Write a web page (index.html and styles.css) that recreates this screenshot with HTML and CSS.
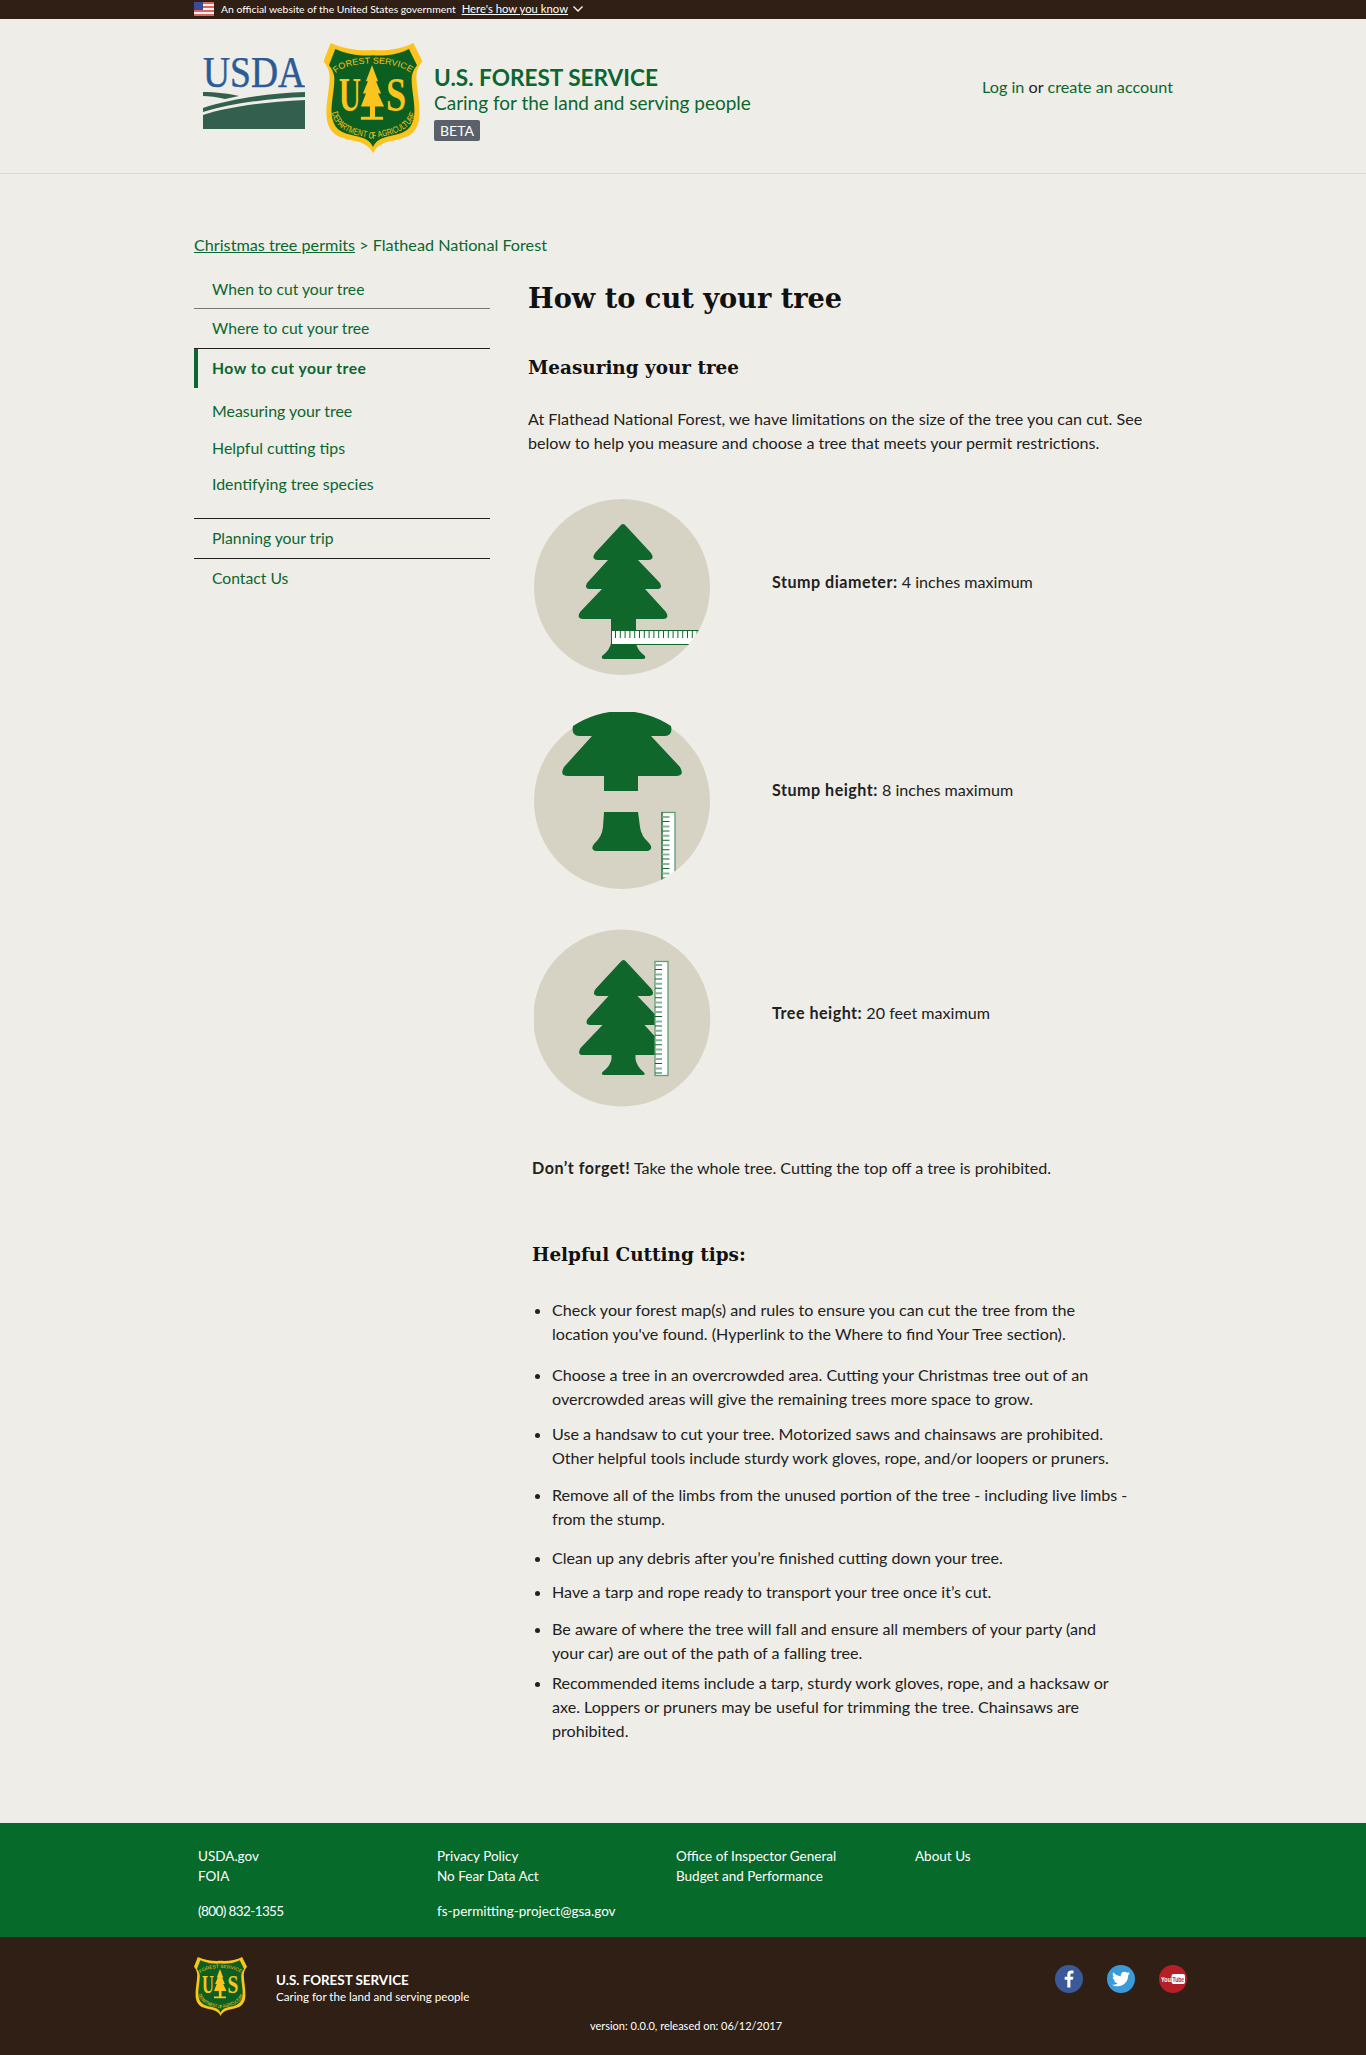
FILE: index.html
```html
<!DOCTYPE html>
<html lang="en">
<head>
    <meta charset="UTF-8">
    <meta name="viewport" content="width=device-width, initial-scale=1.0">
    <title>How to cut your tree</title>
    <link rel="stylesheet" href="styles.css">
</head>
<body>
    <div class="gov-banner">
        <div class="wrap gov-banner-inner">
            <svg class="flag" viewBox="0 0 20 14" width="20" height="14">
                <rect width="20" height="14" fill="#f4efe9"/>
                <path d="M0 1h20M0 5h20M0 9h20M0 13h20" stroke="#d9655c" stroke-width="2"/>
                <rect width="9" height="8" fill="#3c4a9c"/>
            </svg>
            <span>An official website of the United States government</span>
            <a href="#" class="gov-link">Here's how you know</a>
            <svg class="chevron" viewBox="0 0 10 6" width="10" height="6">
                <path d="M.5.5L5 5 9.5.5" fill="none" stroke="#fff" stroke-width="1.300"/>
            </svg>
        </div>
    </div>

    <header class="site-header">
        <div class="wrap site-header-inner">
            <svg class="usda-logo" viewBox="0 0 102 71" width="102" height="71">
                <text class="usda-word" x="0" y="29" font-size="44" textLength="102" lengthAdjust="spacingAndGlyphs" fill="#2b5b97" stroke="#2b5b97" stroke-width=".5">USDA</text>
                <path d="M0 34C12 34 28 36 36 38L22 41C14 39 6 38 0 38Z" fill="#335f4e"/>
                <path d="M102 34V39C70 40 30 45 0 54V50C30 40 70 35 102 34Z" fill="#335f4e"/>
                <path d="M0 57C25 49 60 44 102 42V71H0Z" fill="#335f4e"/>
            </svg>
            <svg class="shield-logo" viewBox="0 0 98 109" width="100" height="110">
                <g id="shield-art">
                    <path d="M7 0C20 6 36 8 49 7C62 8 78 6 89 0L98 18C94 23 92 28 92 33C92 46 96 60 95 73C94 84 89 90 82 93C72 97 64 97 58 100C54 102 51 105 49 109C47 105 44 102 40 100C34 97 26 97 16 93C9 90 4 84 3 73C2 60 6 46 6 33C6 28 4 23 0 18Z" fill="#fcc41e"/>
                    <path d="M7 0C20 6 36 8 49 7C62 8 78 6 89 0L98 18C94 23 92 28 92 33C92 46 96 60 95 73C94 84 89 90 82 93C72 97 64 97 58 100C54 102 51 105 49 109C47 105 44 102 40 100C34 97 26 97 16 93C9 90 4 84 3 73C2 60 6 46 6 33C6 28 4 23 0 18Z" transform="translate(49 54) scale(.89) translate(-49 -54)" fill="#0b5f20"/>
                    <path id="shield-top" d="M12 30C24 17 72 17 87 30" fill="none"/>
                    <path id="shield-bottom" d="M8 69C13 90 34 91 49 95C64 91 85 90 92 69" fill="none"/>
                    <text class="shield-curve" fill="#fcc41e" font-size="8.500"><textPath href="#shield-top" textLength="78" lengthAdjust="spacingAndGlyphs">FOREST SERVICE</textPath></text>
                    <text class="shield-curve" fill="#fcc41e" font-size="9"><textPath href="#shield-bottom" textLength="104" lengthAdjust="spacingAndGlyphs">DEPARTMENT OF AGRICULTURE</textPath></text>
                    <text class="shield-letter" x="15" y="67" fill="#fcc41e" font-size="48" textLength="22" lengthAdjust="spacingAndGlyphs">U</text>
                    <text class="shield-letter" x="62" y="67" fill="#fcc41e" font-size="48" textLength="20" lengthAdjust="spacingAndGlyphs">S</text>
                    <path d="M48 22L54 38H52L57 50H54L60 63H51V73H59V76H37V73H46V63H37L42 50H39L44 38H42Z" fill="#fcc41e"/>
                </g>
            </svg>
            <div class="site-title">
                <div class="site-name">U.S. FOREST SERVICE</div>
                <div class="site-tagline">Caring for the land and serving people</div>
                <span class="beta">BETA</span>
            </div>
            <div class="site-login"><a href="#">Log in</a> or <a href="#">create an account</a></div>
        </div>
    </header>

    <div class="wrap page">
        <div class="breadcrumb"><a href="#">Christmas tree permits</a> &gt; Flathead National Forest</div>
        <div class="columns">
            <nav class="side-nav">
                <a href="#" class="nav-item nav-first">When to cut your tree</a>
                <a href="#" class="nav-item">Where to cut your tree</a>
                <a href="#" class="nav-item nav-current">How to cut your tree</a>
                <div class="nav-sub">
                    <a href="#">Measuring your tree</a>
                    <a href="#">Helpful cutting tips</a>
                    <a href="#">Identifying tree species</a>
                </div>
                <a href="#" class="nav-item">Planning your trip</a>
                <a href="#" class="nav-item nav-last">Contact Us</a>
            </nav>
            <main class="content">
                <h1>How to cut your tree</h1>
                <h2>Measuring your tree</h2>
                <p class="intro">At Flathead National Forest, we have limitations on the size of the tree you can cut. See below to help you measure and choose a tree that meets your permit restrictions.</p>

                <div class="measure-row">
                    <svg class="measure-icon" viewBox="15 18 178 178" width="178" height="178">
                        <defs><clipPath id="clip-one"><circle cx="103" cy="107" r="88"/></clipPath></defs>
                        <circle cx="103" cy="107" r="88" fill="#d6d3c4"/>
                        <path d="M101 46Q104 42 107 46L132 73Q136 79 130 80H119L141 103Q144 109 138 109H126L147 132Q151 139 144 139H117V163Q118 170 126 176Q127 179 124 179H85Q82 179 83 176Q91 170 92 163V139H64Q57 139 61 132L83 109H71Q65 109 68 103L89 80H78Q72 79 76 73Z" fill="#10672b"/>
                        <g clip-path="url(#clip-one)">
                            <rect x="92.500" y="150.500" width="110" height="14" fill="#fff" stroke="#10672b"/>
                            <line x1="96" y1="154.500" x2="202" y2="154.500" stroke="#10672b" stroke-width="7" stroke-dasharray="1 3.800"/>
                        </g>
                    </svg>
                    <p class="measure-text"><strong>Stump diameter:</strong> 4 inches maximum</p>
                </div>

                <div class="measure-row measure-row-stump">
                    <svg class="measure-icon" viewBox="15 17 178 178" width="178" height="178">
                        <defs><clipPath id="clip-two"><circle cx="103" cy="106" r="88"/></clipPath></defs>
                        <circle cx="103" cy="106" r="88" fill="#d6d3c4"/>
                        <path d="M54 31A88 88 0 0 1 152 31Q154 41 146 41H132L161 72Q166 81 157 81H119V96H85V81H49Q40 81 45 72L73 41H60Q52 41 54 31Z" fill="#10672b"/>
                        <path d="M85 117H119L121 132Q122 141 130 148Q135 154 129 156H76Q71 154 75 149Q83 142 84 132Z" fill="#10672b"/>
                        <g clip-path="url(#clip-two)">
                            <rect x="143" y="117.500" width="13" height="90" fill="#fff" stroke="#5f9c74" stroke-width="1.300"/>
                            <line x1="143" y1="117" x2="143" y2="200" stroke="#10672b"/>
                            <line x1="147" y1="121" x2="147" y2="200" stroke="#8ab59a" stroke-width="7" stroke-dasharray="2 7.400"/>
                            <line x1="147" y1="126" x2="147" y2="200" stroke="#10672b" stroke-width="7" stroke-dasharray="1 8.400"/>
                        </g>
                    </svg>
                    <p class="measure-text"><strong>Stump height:</strong> 8 inches maximum</p>
                </div>

                <div class="measure-row">
                    <svg class="measure-icon" viewBox="14.500 13 178 178" width="178" height="178">
                        <circle cx="102.300" cy="102" r="88.500" fill="#d6d3c4"/>
                        <path d="M101 46Q104 42 107 46L132 73Q136 79 130 80H118L140 103Q143 109 137 109H125L146 132Q150 139 143 139H116V143Q117 150 124 156Q127 159 123 159H85Q81 159 83 156Q91 150 92 143V139H64Q57 139 61 132L83 109H71Q65 109 68 103L89 80H78Q72 79 76 73Z" fill="#10672b"/>
                        <rect x="135.500" y="45.500" width="13" height="114" fill="#fff" stroke="#5f9c74" stroke-width="1.300"/>
                        <line x1="139" y1="48" x2="139" y2="158" stroke="#8ab59a" stroke-width="7" stroke-dasharray="2 7.400"/>
                        <line x1="139" y1="53" x2="139" y2="158" stroke="#10672b" stroke-width="7" stroke-dasharray="1 8.400"/>
                    </svg>
                    <p class="measure-text"><strong>Tree height:</strong> 20 feet maximum</p>
                </div>

                <div class="inset">
                    <p class="reminder"><strong>Don’t forget!</strong> Take the whole tree. Cutting the top off a tree is prohibited.</p>
                    <h2 class="tips-title">Helpful Cutting tips:</h2>
                    <ul class="tips">
                        <li>Check your forest map(s) and rules to ensure you can cut the tree from the location you've found. (Hyperlink to the Where to find Your Tree section).</li>
                        <li>Choose a tree in an overcrowded area. Cutting your Christmas tree out of an overcrowded areas will give the remaining trees more space to grow.</li>
                        <li>Use a handsaw to cut your tree. Motorized saws and chainsaws are prohibited. Other helpful tools include sturdy work gloves, rope, and/or loopers or pruners.</li>
                        <li>Remove all of the limbs from the unused portion of the tree - including live limbs - from the stump.</li>
                        <li>Clean up any debris after you’re finished cutting down your tree.</li>
                        <li>Have a tarp and rope ready to transport your tree once it’s cut.</li>
                        <li>Be aware of where the tree will fall and ensure all members of your party (and your car) are out of the path of a falling tree.</li>
                        <li>Recommended items include a tarp, sturdy work gloves, rope, and a hacksaw or axe. Loppers or pruners may be useful for trimming the tree. Chainsaws are prohibited.</li>
                    </ul>
                </div>
            </main>
        </div>
    </div>

    <footer>
        <div class="footer-links">
            <div class="wrap footer-grid">
                <div>
                    <a href="#">USDA.gov</a>
                    <a href="#">FOIA</a>
                    <a href="#" class="footer-contact footer-phone">(800) 832-1355</a>
                </div>
                <div>
                    <a href="#">Privacy Policy</a>
                    <a href="#">No Fear Data Act</a>
                    <a href="#" class="footer-contact">fs-permitting-project@gsa.gov</a>
                </div>
                <div>
                    <a href="#">Office of Inspector General</a>
                    <a href="#">Budget and Performance</a>
                </div>
                <div>
                    <a href="#">About Us</a>
                </div>
            </div>
        </div>
        <div class="footer-brand">
            <div class="wrap footer-brand-inner">
                <svg class="footer-shield" viewBox="0 0 98 109" width="53" height="59"><use href="#shield-art"/></svg>
                <div class="footer-title">
                    <div class="footer-name">U.S. FOREST SERVICE</div>
                    <div class="footer-tagline">Caring for the land and serving people</div>
                </div>
                <div class="social">
                    <svg viewBox="0 0 28 28" width="28" height="28">
                        <circle cx="14" cy="14" r="14" fill="#3b5998"/>
                        <path d="M15.400 22.500V14.800H18L18.400 11.800H15.400V9.900C15.400 9 15.700 8.400 16.900 8.400H18.500V5.700C18.200 5.700 17.300 5.600 16.200 5.600C13.900 5.600 12.300 7 12.300 9.600V11.800H9.700V14.800H12.300V22.500Z" fill="#fff"/>
                    </svg>
                    <svg viewBox="0 0 28 28" width="28" height="28">
                        <circle cx="14" cy="14" r="14" fill="#3b9ad8"/>
                        <g transform="translate(5 5) scale(.75)">
                            <path d="M23.954 4.569c-.885.389-1.83.654-2.825.775 1.014-.611 1.794-1.574 2.163-2.723-.951.555-2.005.959-3.127 1.184-.896-.959-2.173-1.559-3.591-1.559-2.717 0-4.92 2.203-4.92 4.917 0 .39.045.765.127 1.124C7.691 8.094 4.066 6.13 1.64 3.161c-.427.722-.666 1.561-.666 2.475 0 1.71.87 3.213 2.188 4.096-.807-.026-1.566-.248-2.228-.616v.061c0 2.385 1.693 4.374 3.946 4.827-.413.111-.849.171-1.296.171-.314 0-.615-.03-.916-.086.631 1.953 2.445 3.377 4.604 3.417-1.68 1.319-3.809 2.105-6.102 2.105-.39 0-.779-.023-1.17-.067 2.189 1.394 4.768 2.209 7.557 2.209 9.054 0 13.999-7.496 13.999-13.986 0-.209 0-.42-.015-.63.961-.689 1.8-1.56 2.46-2.548l-.047-.02z" fill="#fff"/>
                        </g>
                    </svg>
                    <svg viewBox="0 0 28 28" width="28" height="28">
                        <circle cx="14" cy="14" r="14" fill="#b71f27"/>
                        <text class="yt-word" x="2" y="17" font-size="7.500" fill="#fff" textLength="10" lengthAdjust="spacingAndGlyphs">You</text>
                        <rect x="12.500" y="9" width="13.500" height="10" rx="2" fill="#fff"/>
                        <text class="yt-word" x="13.500" y="17" font-size="7.500" fill="#b71f27" textLength="11.500" lengthAdjust="spacingAndGlyphs">Tube</text>
                    </svg>
                </div>
            </div>
            <div class="version">version: 0.0.0, released on: 06/12/2017</div>
        </div>
    </footer>
</body>
</html>
```

FILE: styles.css
```css
body {
    margin: 0;
    padding: 0;
    background-color: #efede7;
    color: #212121;
    font-family: Lato, "Open Sans", sans-serif;
    font-size: 16px;
}
a {
    color: #0b6630;
    text-decoration: none;
}
strong {
    font-weight: bold;
    letter-spacing: .5px;
}
.wrap {
    width: 978px;
    margin: 0 auto;
}

/* top banner */
.gov-banner {
    height: 19px;
    background-color: #2f1f14;
    color: #fff;
    font-size: 10.400px;
    line-height: 18px;
}
.gov-banner-inner {
    display: flex;
    align-items: center;
    height: 18px;
}
.flag {
    margin-right: 7px;
}
.gov-link {
    margin-left: 6px;
    color: #fff;
    font-size: 11.300px;
    text-decoration: underline;
}
.chevron {
    margin-left: 5px;
}

/* header */
.site-header {
    height: 154px;
    border-bottom: 1px solid #d8d8d4;
}
.site-header-inner {
    display: flex;
    align-items: flex-start;
}
.usda-logo {
    margin: 39px 0 0 9px;
}
.usda-word, .shield-letter {
    font-family: "Liberation Serif", serif;
}
.shield-letter {
    font-weight: bold;
}
.shield-curve {
    font-family: "Liberation Sans", sans-serif;
}
.shield-logo {
    margin: 24px 0 0 18px;
}
.site-title {
    margin: 46px 0 0 11px;
    color: #0b6630;
}
.site-name {
    font-size: 22.600px;
    font-weight: bold;
    line-height: 26px;
}
.site-tagline {
    font-size: 19px;
    line-height: 23px;
}
.beta {
    display: inline-block;
    margin-top: 6px;
    padding: 0 6px;
    border-radius: 2px;
    background-color: #5b616b;
    color: #fff;
    font-size: 14px;
    line-height: 21px;
}
.site-login {
    margin: 54px -1px 0 auto;
    font-size: 16.200px;
    line-height: 28px;
}

/* sidebar */
.breadcrumb {
    padding-top: 60px;
    color: #0b6630;
    font-size: 16.200px;
    line-height: 22px;
}
.breadcrumb a {
    text-decoration: underline;
}
.columns {
    display: flex;
    margin-top: 14px;
}
.side-nav {
    flex: 0 0 296px;
    font-size: 15.700px;
}
.nav-item {
    display: block;
    padding: 0 18px;
    border-bottom: 1px solid #212121;
    line-height: 39px;
}
.nav-first {
    border-bottom-color: #777;
    line-height: 38px;
}
.nav-current {
    border-left: 4px solid #0b6630;
    border-bottom: none;
    padding-left: 14px;
    font-weight: bold;
    letter-spacing: .5px;
}
.nav-last {
    border-bottom: none;
}
.nav-sub {
    display: flex;
    flex-direction: column;
    padding: 5px 18px 15px;
    border-bottom: 1px solid #212121;
    font-size: 15.900px;
}
.nav-sub a {
    line-height: 36.500px;
}

/* main column */
.content {
    margin-left: 38px;
    width: 644px;
    font-size: 16.100px;
}
h1 {
    margin: 8px 0 0;
    color: #111;
    font-family: "DejaVu Serif", serif;
    font-size: 27.200px;
    line-height: 40px;
}
h2 {
    margin: 35px 0 0;
    color: #111;
    font-family: "DejaVu Serif", serif;
    font-size: 18.400px;
    line-height: 30px;
}
.intro {
    margin: 24px 0 0;
    line-height: 24px;
}
.measure-row {
    display: flex;
    align-items: center;
    margin-bottom: 39px;
}
.intro + .measure-row {
    margin-top: 43px;
}
.measure-row-stump {
    margin-top: -3px;
}
.measure-icon {
    flex: none;
    margin-left: 6px;
}
.measure-text {
    margin: 0 0 11px 60px;
}
.measure-row-stump .measure-text {
    margin-bottom: 23px;
}
.inset {
    padding-left: 4px;
}
.reminder {
    margin: 0;
    padding-top: 10px;
    line-height: 24px;
}
.tips-title {
    margin: 60px 0 0;
}
.tips {
    margin: 28px 0 0;
    padding: 0 0 0 20px;
    width: 576px;
}
.tips li {
    margin-bottom: 13px;
    line-height: 24px;
}
.tips li:nth-child(1) {
    margin-bottom: 17px;
}
.tips li:nth-child(2) {
    margin-bottom: 11px;
}
.tips li:nth-child(4) {
    margin-bottom: 15px;
}
.tips li:nth-child(5) {
    margin-bottom: 10px;
}
.tips li:nth-child(7) {
    margin-bottom: 6px;
}
.tips li:last-child {
    margin-bottom: 80px;
}

/* footer */
footer {
    font-size: 13.500px;
}
footer a {
    color: #fff;
    display: block;
}
.footer-links {
    height: 114px;
    background-color: #066a2b;
}
.footer-grid {
    display: grid;
    grid-template-columns: repeat(4, 239px);
    padding: 23px 0 0 4px;
    box-sizing: border-box;
    line-height: 20px;
}
.footer-contact {
    margin-top: 15px;
}
.footer-phone {
    letter-spacing: -.6px;
}
.footer-brand {
    height: 118px;
    background-color: #2f1f14;
    color: #fff;
}
.footer-brand-inner {
    display: flex;
    align-items: flex-start;
}
.footer-shield {
    margin-top: 20px;
}
.footer-title {
    margin: 34px 0 0 29px;
}
.footer-name {
    font-size: 13.400px;
    font-weight: bold;
    line-height: 18px;
}
.footer-tagline {
    font-size: 11.600px;
    line-height: 16px;
}
.social {
    display: flex;
    gap: 24px;
    margin: 28px -15px 0 auto;
}
.yt-word {
    font-family: "Liberation Sans", sans-serif;
    font-weight: bold;
}
.version {
    margin-top: 2px;
    padding-left: 6px;
    font-size: 11px;
    line-height: 16px;
    text-align: center;
}
```
